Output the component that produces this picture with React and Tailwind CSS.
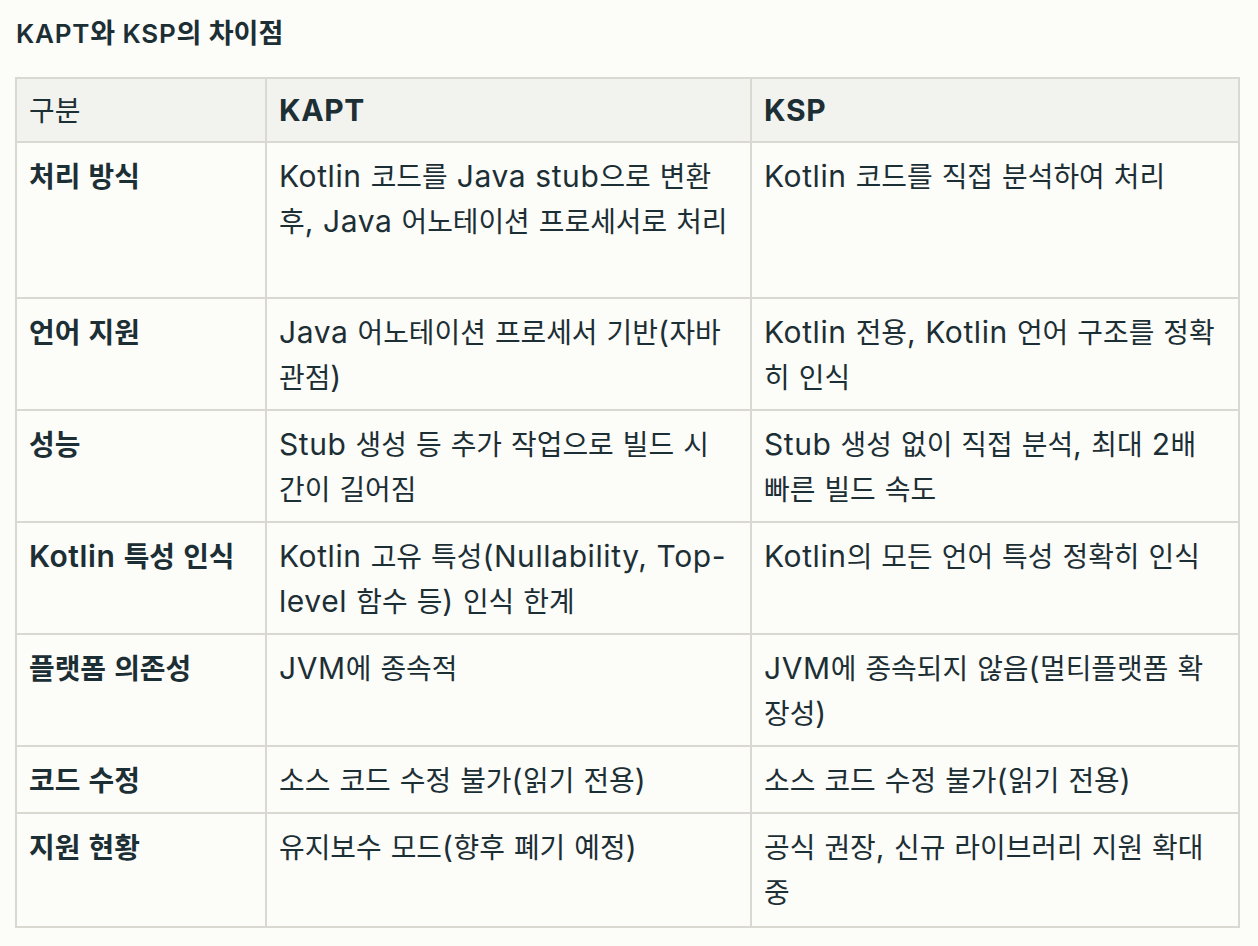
import React from 'react';

const HANGUL = /([\u1100-\u11FF\u3130-\u318F\uAC00-\uD7AF]+)/;

// Hangul runs sit a bit smaller than the Latin text in the picture
function Mixed({ text, size = 'text-[0.93em]' }) {
  return text.split(HANGUL).map((part, i) =>
    i % 2 === 1 ? (
      <span key={i} className={`${size} leading-none tracking-normal`}>
        {part}
      </span>
    ) : (
      <React.Fragment key={i}>{part}</React.Fragment>
    )
  );
}

function Lines({ lines }) {
  return lines.map((line, i) => (
    <div key={i} className="whitespace-nowrap">
      <Mixed text={line} />
    </div>
  ));
}

const ROWS = [
  {
    h: 'h-[156px]',
    label: ['처리 방식'],
    kapt: ['Kotlin 코드를 Java stub으로 변환', '후, Java 어노테이션 프로세서로 처리'],
    ksp: ['Kotlin 코드를 직접 분석하여 처리'],
  },
  {
    h: 'h-[112px]',
    label: ['언어 지원'],
    kapt: ['Java 어노테이션 프로세서 기반(자바', '관점)'],
    ksp: ['Kotlin 전용, Kotlin 언어 구조를 정확', '히 인식'],
  },
  {
    h: 'h-[112px]',
    label: ['성능'],
    kapt: ['Stub 생성 등 추가 작업으로 빌드 시', '간이 길어짐'],
    ksp: ['Stub 생성 없이 직접 분석, 최대 2배', '빠른 빌드 속도'],
  },
  {
    h: 'h-[112px]',
    label: ['Kotlin 특성 인식'],
    kapt: ['Kotlin 고유 특성(Nullability, Top-', 'level 함수 등) 인식 한계'],
    ksp: ['Kotlin의 모든 언어 특성 정확히 인식'],
  },
  {
    h: 'h-[112px]',
    label: ['플랫폼 의존성'],
    kapt: ['JVM에 종속적'],
    ksp: ['JVM에 종속되지 않음(멀티플랫폼 확', '장성)'],
  },
  {
    h: 'h-[67px]',
    label: ['코드 수정'],
    kapt: ['소스 코드 수정 불가(읽기 전용)'],
    ksp: ['소스 코드 수정 불가(읽기 전용)'],
  },
  {
    h: 'h-[114px]',
    label: ['지원 현황'],
    kapt: ['유지보수 모드(향후 폐기 예정)'],
    ksp: ['공식 권장, 신규 라이브러리 지원 확대', '중'],
  },
];

const cell = 'border-2 border-[#d9d9d2] px-[12px] align-top text-left';
const body = `${cell} pt-[11px] pb-[9px]`;
const head = `${cell} pt-[9px] pb-[8px]`;

export default function App() {
  return (
    <div className="min-h-screen bg-[#fcfcf9] px-[15px] pt-[17px] pb-4 font-[Inter,'Noto_Sans_CJK_KR',sans-serif] text-[#1c2f35]">
      <h2 className="ml-[1px] text-[26px] leading-[34px] font-semibold tracking-[0.03em]">
        <Mixed text="KAPT와 KSP의 차이점" size="text-[1.04em]" />
      </h2>

      <table className="mt-[26px] w-[1223px] table-fixed border-collapse text-[30px] leading-[45px] tracking-[0.02em]">
        <colgroup>
          <col className="w-[250px]" />
          <col className="w-[485px]" />
          <col className="w-[488px]" />
        </colgroup>
        <thead>
          <tr className="h-[64px] bg-[#f2f2ee]">
            <th className={`${head} font-normal`}>
              <Mixed text="구분" />
            </th>
            <th className={`${head} font-bold`}>KAPT</th>
            <th className={`${head} font-bold`}>KSP</th>
          </tr>
        </thead>
        <tbody>
          {ROWS.map((row, i) => (
            <tr key={i} className={row.h}>
              <td className={`${body} font-semibold`}>
                <Lines lines={row.label} />
              </td>
              <td className={body}>
                <Lines lines={row.kapt} />
              </td>
              <td className={body}>
                <Lines lines={row.ksp} />
              </td>
            </tr>
          ))}
        </tbody>
      </table>
    </div>
  );
}
